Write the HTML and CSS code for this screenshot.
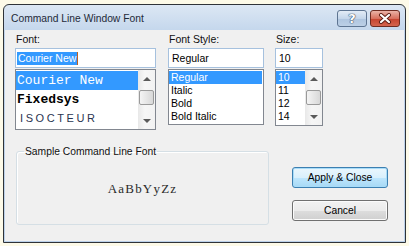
FILE: index.html
```html
<!DOCTYPE html>
<html lang="en">
<head>
    <meta charset="UTF-8">
    <title>Command Line Window Font</title>
    <link rel="stylesheet" href="styles.css">
</head>
<body>
    <div class="window">
        <div class="titlebar">
            <span class="title">Command Line Window Font</span>
            <div class="caption-buttons">
                <button class="cap help">?</button>
                <button class="cap close">
                    <svg width="14" height="11" viewBox="0 0 14 11">
                        <path d="M3 2 L11 9 M11 2 L3 9" stroke="#5b1d14" stroke-width="4" stroke-linecap="round"/>
                        <path d="M3 2 L11 9 M11 2 L3 9" stroke="#fff" stroke-width="2.2" stroke-linecap="round"/>
                    </svg>
                </button>
            </div>
        </div>

        <div class="client">
            <div class="pickers">
                <div class="picker col-font">
                    <label class="field-label">Font:</label>
                    <div class="edit edit-font"><span class="selected-text">Courier New</span><span class="caret"></span></div>
                    <div class="list font-list">
                        <ul>
                            <li class="selected courier">Courier New</li>
                            <li class="fixedsys">Fixedsys</li>
                            <li class="isocteur">ISOCTEUR</li>
                        </ul>
                        <div class="scrollbar">
                            <div class="arrow up"></div>
                            <div class="track"><div class="thumb"></div></div>
                            <div class="arrow down"></div>
                        </div>
                    </div>
                </div>

                <div class="picker col-style">
                    <label class="field-label">Font Style:</label>
                    <div class="edit">Regular</div>
                    <div class="list style-list">
                        <ul>
                            <li class="selected">Regular</li>
                            <li>Italic</li>
                            <li>Bold</li>
                            <li>Bold Italic</li>
                        </ul>
                    </div>
                </div>

                <div class="picker col-size">
                    <label class="field-label">Size:</label>
                    <div class="edit">10</div>
                    <div class="list size-list">
                        <ul>
                            <li class="selected">10</li>
                            <li>11</li>
                            <li>12</li>
                            <li>14</li>
                        </ul>
                        <div class="scrollbar">
                            <div class="arrow up"></div>
                            <div class="track"><div class="thumb"></div></div>
                            <div class="arrow down"></div>
                        </div>
                    </div>
                </div>
            </div>

            <div class="bottom">
                <fieldset class="sample">
                    <legend>Sample Command Line Font</legend>
                    <div class="sample-text">AaBbYyZz</div>
                </fieldset>
                <div class="actions">
                    <button class="btn btn-default">Apply &amp; Close</button>
                    <button class="btn">Cancel</button>
                </div>
            </div>
        </div>
    </div>
</body>
</html>
```

FILE: styles.css
```css
* {
    margin: 0;
    padding: 0;
    box-sizing: border-box;
}
body {
    font-family: "Liberation Sans", Arial, sans-serif;
    font-size: 10.5px;
    background-color: #fdfae8;
    color: #000;
}
.window {
    margin: 4px 0 0 3px;
    width: 403px;
    height: 239px;
    border: 1px solid #2f3338;
    border-radius: 6px 6px 0 0;
    background: linear-gradient(#dce7f4, #c0d4eb 30px, #bcd1e9);
    padding: 0 1px 1px;
    display: flex;
    flex-direction: column;
}
.titlebar {
    height: 25px;
    display: flex;
    align-items: center;
    justify-content: space-between;
    padding: 0 4px 0 6px;
}
.title {
    font-size: 10.3px;
    color: #1e2a38;
    margin-top: 1px;
}
.caption-buttons {
    display: flex;
    gap: 3px;
    margin-top: 1px;
}
.cap {
    width: 30px;
    height: 17px;
    border-radius: 3px;
    display: flex;
    align-items: center;
    justify-content: center;
    font-family: "DejaVu Sans", sans-serif;
}
.help {
    border: 1px solid #5e7592;
    background: linear-gradient(#e3ecf6, #c4d6ea 50%, #aec5df 51%, #bcd0e6);
    color: #fff;
    font-size: 13px;
    font-weight: bold;
    text-shadow: 0 0 1px #34465e, 0 0 1px #34465e, 0 0 1px #34465e;
}
.close {
    border: 1px solid #6e2c22;
    background: linear-gradient(#eab3a7, #d8705e 50%, #c5432f 51%, #d4654f);
}
.client {
    flex: 1;
    background-color: #f0f0f0;
    padding: 3px 0 0 10px;
}
.pickers {
    display: flex;
    gap: 12px;
}
.col-font {
    width: 141px;
}
.col-style {
    width: 96px;
}
.col-size {
    width: 48px;
    margin-left: -1px;
}
.field-label {
    display: block;
    height: 13px;
    line-height: 13px;
    margin-bottom: 2px;
    padding-left: 1px;
    color: #111;
}
.edit {
    height: 20px;
    border: 1px solid #a6c1de;
    background-color: #fff;
    padding-left: 3px;
    line-height: 18px;
    display: flex;
    align-items: center;
}
.edit-font {
    padding-left: 1px;
}
.selected-text {
    background-color: #3399ff;
    color: #fff;
    line-height: 13px;
    padding: 0 1px;
}
.caret {
    width: 1px;
    height: 13px;
    background-color: #c06020;
}
.list {
    margin-top: 1px;
    border: 1px solid #828790;
    background-color: #fff;
    display: flex;
    padding: 1px 0 0 0;
}
.list ul {
    list-style: none;
    flex: 1;
}
.list li {
    height: 13px;
    line-height: 13px;
    padding-left: 2px;
    white-space: nowrap;
}
.list li.selected {
    background-color: #3399ff;
    color: #fff;
}
.font-list {
    height: 61px;
}
.font-list li {
    height: 19px;
    line-height: 19px;
    padding-left: 1px;
    font-family: "Liberation Mono", "Courier New", monospace;
    font-size: 13px;
}
.font-list li.fixedsys {
    font-weight: bold;
}
.font-list li.isocteur {
    font-family: "Liberation Sans", Arial, sans-serif;
    font-size: 11px;
    letter-spacing: 2.6px;
    padding-left: 4px;
    color: #2a3550;
}
.style-list {
    height: 56px;
    padding-right: 1px;
}
.size-list {
    height: 57px;
}
.scrollbar {
    width: 17px;
    margin-top: -1px;
    display: flex;
    flex-direction: column;
    background: linear-gradient(90deg, #e8e8e8, #f6f6f6 40%, #f2f2f2);
}
.arrow {
    height: 17px;
    display: flex;
    align-items: center;
    justify-content: center;
}
.arrow.up::before {
    content: "";
    border-left: 4px solid transparent;
    border-right: 4px solid transparent;
    border-bottom: 4px solid #5a5a5a;
}
.arrow.down::before {
    content: "";
    border-left: 4px solid transparent;
    border-right: 4px solid transparent;
    border-top: 4px solid #5a5a5a;
}
.track {
    flex: 1;
    padding-top: 3px;
}
.thumb {
    height: 15px;
    margin: 0 1px;
    border: 1px solid #9a9a9a;
    border-radius: 2px;
    background: linear-gradient(90deg, #f4f4f4, #e6e6e6 50%, #d8d8d8);
}
.bottom {
    display: flex;
    margin-top: 15px;
}
.sample {
    width: 253px;
    height: 80px;
    margin-left: 1px;
    border: 1px solid #d5dfe5;
    border-radius: 3px;
    box-shadow: inset 1px 1px 0 #fff;
    display: flex;
    align-items: center;
    justify-content: center;
}
.sample legend {
    margin-left: 7px;
    padding: 0 1px;
    line-height: 13px;
    font-size: 10.3px;
    color: #111;
}
.sample-text {
    font-family: "Liberation Serif", "Times New Roman", serif;
    font-size: 13px;
    letter-spacing: 1.2px;
    color: #2a2a2a;
    margin-top: -5px;
}
.actions {
    margin: 22px 0 0 23px;
    display: flex;
    flex-direction: column;
    gap: 12px;
}
.btn {
    width: 96px;
    height: 21px;
    border: 1px solid #707070;
    border-radius: 3px;
    background: linear-gradient(#f2f2f2, #ebebeb 50%, #dddddd 51%, #cfcfcf);
    font-family: "Liberation Sans", Arial, sans-serif;
    font-size: 10.3px;
    color: #000;
    box-shadow: inset 0 0 0 1px #fbfbfb;
}
.btn-default {
    border-color: #3c7fb1;
    background: linear-gradient(#eaf6fd, #d9f0fc 50%, #bee6fd 51%, #a7d9f5);
    box-shadow: inset 0 0 0 1px #a8dcf8;
}
```
